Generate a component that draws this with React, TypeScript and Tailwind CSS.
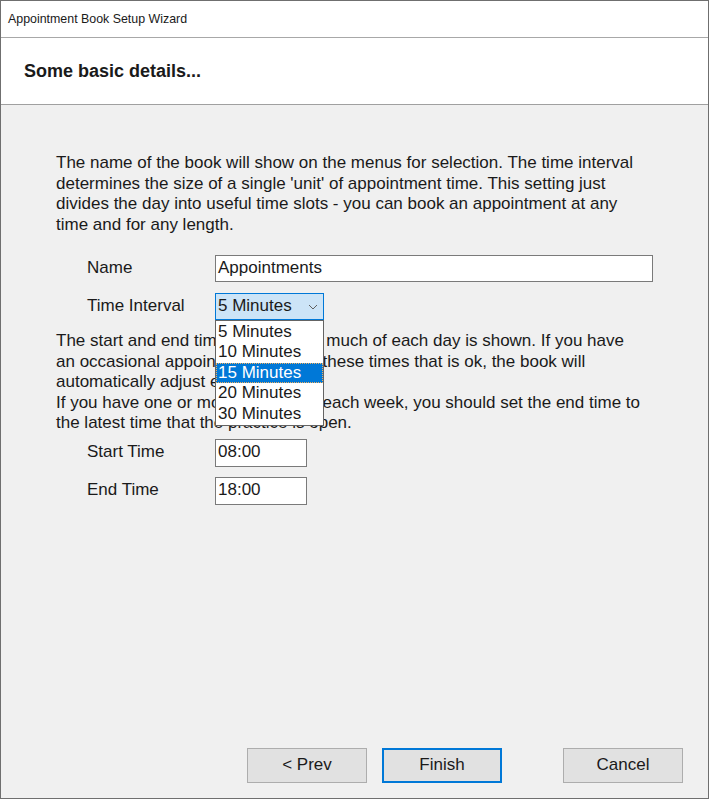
import React from "react";

const intervals = ["5 Minutes", "10 Minutes", "15 Minutes", "20 Minutes", "30 Minutes"];

const Field: React.FC<{ label: string; children: React.ReactNode }> = ({ label, children }) => (
  <div className="flex items-center">
    <span className="w-[159px] pl-[31px]">{label}</span>
    {children}
  </div>
);

const WizardButton: React.FC<{ label: string; focused?: boolean }> = ({ label, focused }) => (
  <button
    className={
      focused
        ? "w-[120px] h-[35px] bg-[#e1e1e1] border-2 border-[#0078d7] text-[17px] text-[#1a1a1a]"
        : "w-[120px] h-[35px] bg-[#e1e1e1] border border-[#adadad] text-[17px] text-[#1a1a1a]"
    }
  >
    {label}
  </button>
);

export default function App() {
  return (
    <div className="w-[709px] h-[799px] flex flex-col border border-[#6f6f6f] font-['Liberation_Sans',Arial,sans-serif] text-[#1a1a1a] overflow-hidden">
      <div className="h-[37px] bg-white flex items-center px-[7px] text-[12.4px] border-b border-[#a8a8a8]">
        Appointment Book Setup Wizard
      </div>
      <div className="h-[67px] bg-white flex items-center pl-[23px] text-[18px] font-bold border-b border-[#a0a0a0]">
        Some basic details...
      </div>
      <div className="flex-1 bg-[#f0f0f0] flex flex-col pl-[55px] pt-[48px] text-[17px] leading-[20.5px] relative">
        <p>
          The name of the book will show on the menus for selection. The time interval
          <br />
          determines the size of a single 'unit' of appointment time. This setting just
          <br />
          divides the day into useful time slots - you can book an appointment at any
          <br />
          time and for any length.
        </p>
        <div className="flex flex-col gap-[11px] mt-[20px]">
          <Field label="Name">
            <div className="w-[438px] h-[27px] bg-white border border-[#7a7a7a] flex items-center pl-[2px]">
              Appointments
            </div>
          </Field>
          <Field label="Time Interval">
            <div className="relative">
              <div className="w-[109px] h-[27px] bg-[#cce4f7] border border-[#0078d7] flex items-center justify-between pl-[2px] pr-[4px]">
                <span>5 Minutes</span>
                <svg width="10" height="6" viewBox="0 0 10 6" className="mr-[1px]">
                  <path d="M1 1 L5 5 L9 1" fill="none" stroke="#606060" strokeWidth="1" />
                </svg>
              </div>
              <div className="absolute left-0 top-[27px] w-[109px] bg-white border border-[#646464] flex flex-col z-10 py-[1px]">
                {intervals.map((item) => (
                  <div
                    key={item}
                    className={
                      item === "15 Minutes"
                        ? "h-[20.4px] flex items-center pl-[2px] bg-[#0078d7] text-white outline-1 outline-dotted outline-[#f0b060] -outline-offset-1"
                        : "h-[20.4px] flex items-center pl-[2px]"
                    }
                  >
                    {item}
                  </div>
                ))}
              </div>
            </div>
          </Field>
        </div>
        <p className="mt-[11px]">
          The start and end times define how much of each day is shown. If you have
          <br />
          an occasional appointment outside these times that is ok, the book will
          <br />
          automatically adjust each day.
          <br />
          If you have one or more late nights each week, you should set the end time to
          <br />
          the latest time that the practice is open.
        </p>
        <div className="flex flex-col gap-[10px] mt-[5px]">
          <Field label="Start Time">
            <div className="w-[92px] h-[28px] bg-white border border-[#7a7a7a] flex items-center pl-[2px]">
              08:00
            </div>
          </Field>
          <Field label="End Time">
            <div className="w-[92px] h-[28px] bg-white border border-[#7a7a7a] flex items-center pl-[2px]">
              18:00
            </div>
          </Field>
        </div>
        <div className="mt-auto mb-[15px] flex items-center pl-[191px]">
          <WizardButton label="< Prev" />
          <div className="ml-[15px]">
            <WizardButton label="Finish" focused />
          </div>
          <div className="ml-[61px]">
            <WizardButton label="Cancel" />
          </div>
        </div>
      </div>
    </div>
  );
}
